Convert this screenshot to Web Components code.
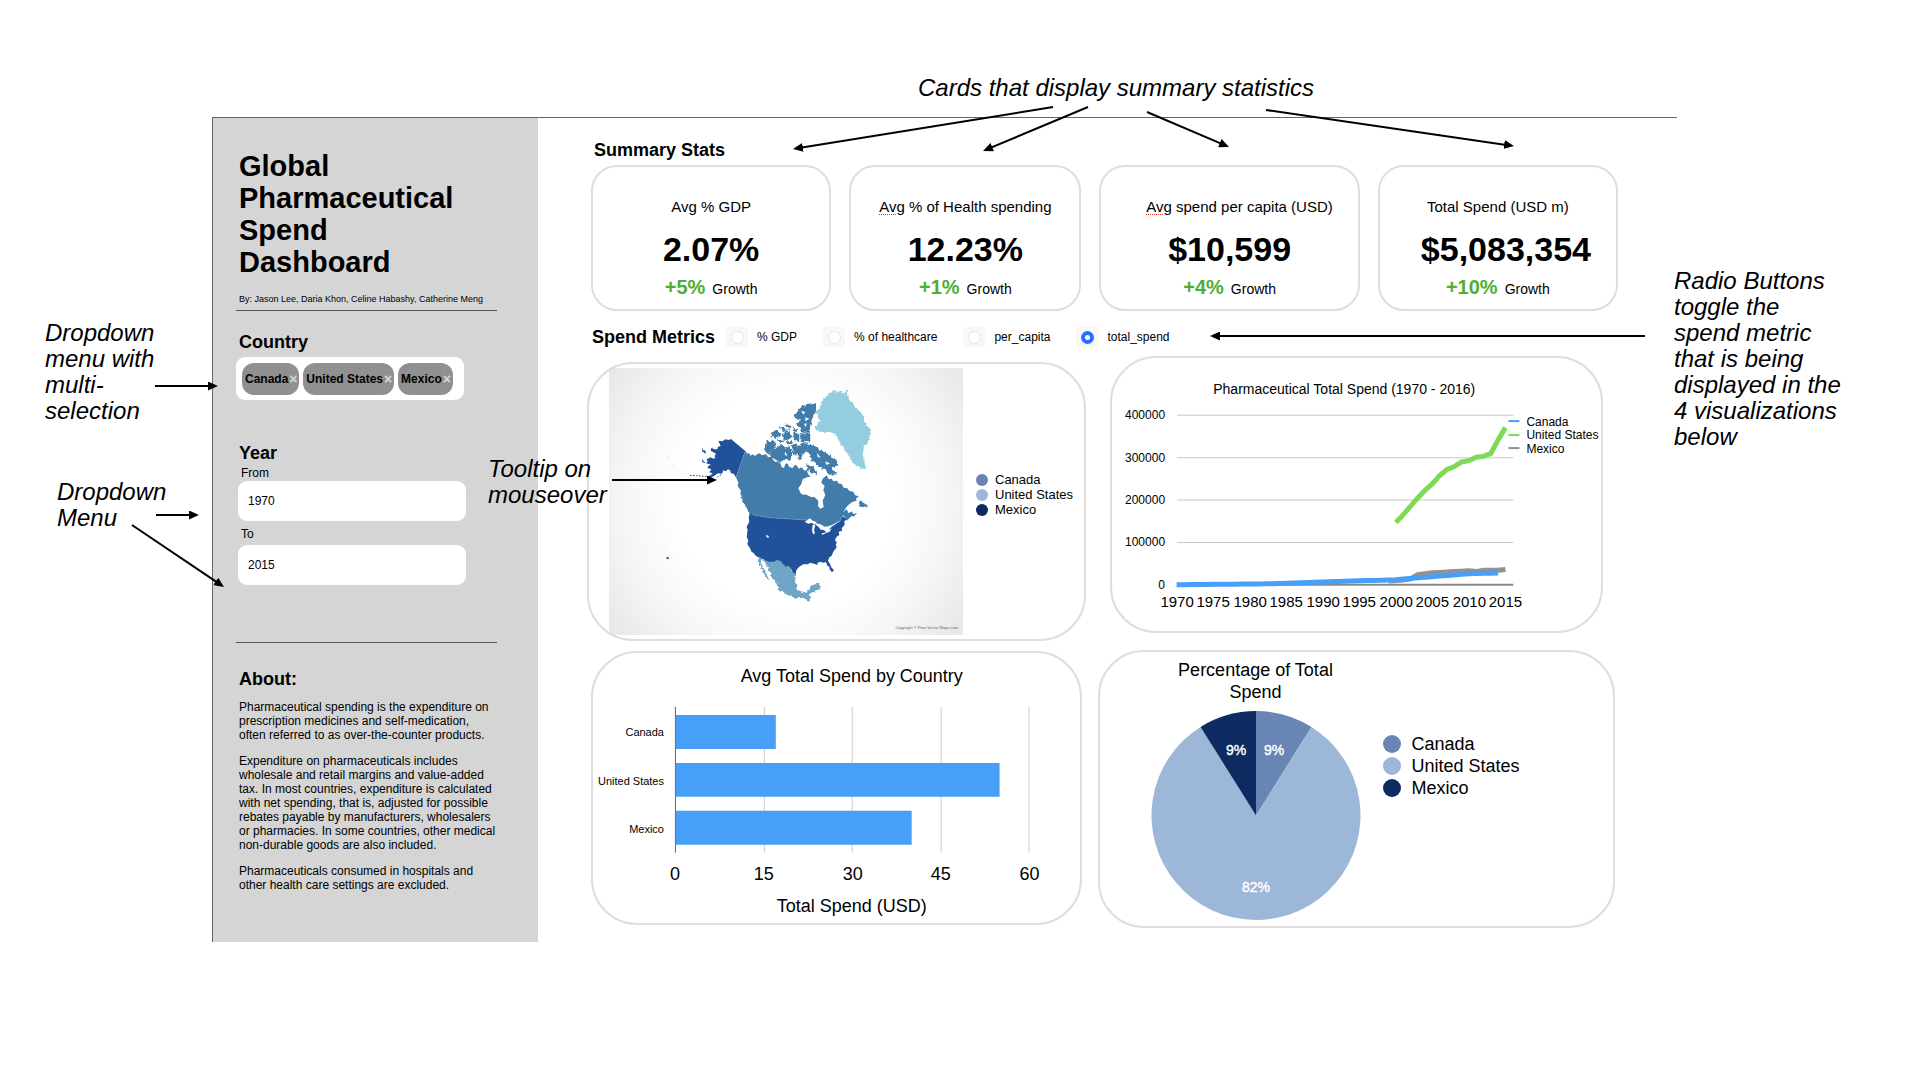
<!DOCTYPE html>
<html lang="en">
<head>
<meta charset="utf-8">
<title>Global Pharmaceutical Spend Dashboard</title>
<style>
  body { margin: 0; background: #fff; color: #000; font-family: "Liberation Sans", Arial, sans-serif; position: relative; overflow-x: hidden; }
</style>
</head>
<body>
<spend-dashboard>
  <filter-sidebar slot="side"></filter-sidebar>
  <stat-card slot="stat" label="% GDP" avg value="2.07%" growth="+5%"></stat-card>
  <stat-card slot="stat" label="% of Health spending" avg flagged value="12.23%" growth="+1%"></stat-card>
  <stat-card slot="stat" label="spend per capita (USD)" avg flagged label-end value="$10,599" growth="+4%"></stat-card>
  <stat-card slot="stat" label="Total Spend (USD m)" value-end value="$5,083,354" growth="+10%"></stat-card>
  <metric-picker slot="metrics"></metric-picker>
  <chart-card slot="left"><map-chart></map-chart></chart-card>
  <chart-card slot="left" class="inset"><bar-chart></bar-chart></chart-card>
  <chart-card slot="right" class="inset"><line-chart></line-chart></chart-card>
  <chart-card slot="right"><pie-chart></pie-chart></chart-card>
</spend-dashboard>
<note-layer>
  <call-out x="918" y="75" w="420">Cards that display summary statistics</call-out>
  <call-out x="45" y="320" w="120">Dropdown menu with multi-selection</call-out>
  <call-out x="57" y="479" w="120">Dropdown Menu</call-out>
  <call-out x="488" y="456" w="125">Tooltip on mouseover</call-out>
  <call-out x="1674" y="268" w="172">Radio Buttons toggle the spend metric that is being displayed in the 4 visualizations below</call-out>
</note-layer>
<script>
const define = (name, html, ready) => customElements.define(name, class extends HTMLElement {
  constructor() {
    super();
    this.attachShadow({ mode: 'open' });
  }
  connectedCallback() {
    this.shadowRoot.innerHTML = typeof html === 'function' ? html(this) : html;
    if (ready) ready(this);
  }
});

define('spend-dashboard', `
<style>
  :host { display: flex; margin: 117px 243px 0 212px; border-top: 1px solid #666; }
  main { flex: 1; min-width: 0; padding: 22px 62px 0 49px; }
  h2 { margin: 0 0 5px 7px; font-size: 18px; line-height: 20px; }
  .stats { display: grid; grid-template-columns: 240fr 232fr 260fr 240fr; gap: 18px; margin: 0 -3px 16px 4px; }
  .charts { display: grid; grid-template-columns: 499fr 518fr; gap: 12px; margin-top: 9px; }
  .left, .right { display: flex; flex-direction: column; min-width: 0; }
  .left { gap: 10px; padding-top: 6px; }
  .right { gap: 17px; }
  .left ::slotted(.inset) { margin: 0 4px; }
  .right ::slotted(.inset) { margin: 0 12px; }
</style>
<slot name="side"></slot>
<main>
  <h2>Summary Stats</h2>
  <div class="stats"><slot name="stat"></slot></div>
  <slot name="metrics"></slot>
  <div class="charts">
    <div class="left"><slot name="left"></slot></div>
    <div class="right"><slot name="right"></slot></div>
  </div>
</main>`);

define('filter-sidebar', `
<style>
  :host { display: block; box-sizing: border-box; flex: 0 0 326px; min-height: 824px; background: #d5d5d5; border-left: 1px solid #666; padding: 32px 32px 0 23px; }
  h1 { margin: 0 0 15px 3px; font-size: 29px; line-height: 32px; }
  .by { margin: 0 0 5px 3px; font-size: 9px; line-height: 12px; white-space: nowrap; }
  hr { width: 261px; margin: 0; border: 0; border-top: 1px solid #555; }
  h2 { margin: 0 0 0 3px; font-size: 18px; line-height: 20px; }
  .country { margin-top: 21px; }
  .chips { display: flex; align-items: center; gap: 4px; box-sizing: border-box; width: 228px; height: 43px; margin: 5px 0 43px; padding: 0 6px; background: #fff; border-radius: 9px; }
  .chip { display: flex; align-items: center; height: 32px; padding: 0 1px 0 3px; border-radius: 12px; background: #909090; font-size: 12px; font-weight: bold; }
  .chip button { all: unset; width: 10px; text-align: center; color: #d8d8d8; font-size: 14px; line-height: 14px; cursor: pointer; }
  label { display: block; margin: 3px 0 0 5px; font-size: 12px; line-height: 14px; }
  .to { margin-top: 6px; }
  select { appearance: none; display: block; width: 228px; height: 40px; margin: 1px 0 0 2px; padding: 0 10px; border: 0; border-radius: 9px; background: #fff; color: #000; font: 12px "Liberation Sans", Arial, sans-serif; }
  .to + select { margin-top: 4px; }
  .rule { margin-top: 57px; }
  .about { margin-top: 26px; margin-bottom: 11px; }
  p { margin: 0 4px 12px 3px; font-size: 12px; line-height: 14px; }
</style>
<h1>Global<br>Pharmaceutical<br>Spend<br>Dashboard</h1>
<div class="by">By: Jason Lee, Daria Khon, Celine Habashy, Catherine Meng</div>
<hr>
<h2 class="country">Country</h2>
<div class="chips">
  <span class="chip">Canada<button aria-label="Remove Canada">×</button></span>
  <span class="chip">United States<button aria-label="Remove United States">×</button></span>
  <span class="chip">Mexico<button aria-label="Remove Mexico">×</button></span>
</div>
<h2>Year</h2>
<label for="from">From</label>
<select id="from"><option>1970</option></select>
<label class="to" for="to">To</label>
<select id="to"><option>2015</option></select>
<hr class="rule">
<h2 class="about">About:</h2>
<p>Pharmaceutical spending is the expenditure on prescription medicines and self-medication,<br>often referred to as over-the-counter products.</p>
<p>Expenditure on pharmaceuticals includes wholesale and retail margins and value-added tax. In most countries, expenditure is calculated with net spending, that is, adjusted for possible rebates payable by manufacturers, wholesalers<br>or pharmacies. In some countries, other medical non-durable goods are also included.</p>
<p>Pharmaceuticals consumed in hospitals and<br>other health care settings are excluded.</p>`);

define('stat-card', el => `
<style>
  :host { display: block; box-sizing: border-box; height: 146px; padding: 31px 25px 0; border: 2px solid #dedede; border-radius: 26px; text-align: center; white-space: nowrap; }
  .label { font-size: 15px; line-height: 18px; }
  .flag { text-decoration: underline dotted #e33 1px; text-underline-offset: 2px; }
  .value { margin-top: 14px; font-size: 34px; line-height: 38px; font-weight: bold; }
  .end { text-align: right; }
  .growth { display: flex; justify-content: center; align-items: baseline; gap: 7px; margin-top: 7px; line-height: 24px; font-size: 14px; }
  b { color: #4fae33; font-size: 20px; }
</style>
<div class="label ${el.hasAttribute('label-end') ? 'end' : ''}">${el.hasAttribute('avg') ? `<span class="${el.hasAttribute('flagged') ? 'flag' : ''}">Avg</span> ` : ''}${el.getAttribute('label')}</div>
<div class="value ${el.hasAttribute('value-end') ? 'end' : ''}">${el.getAttribute('value')}</div>
<div class="growth"><b>${el.getAttribute('growth')}</b><span>Growth</span></div>`);

define('metric-picker', () => `
<style>
  :host { display: flex; align-items: center; height: 20px; padding-left: 5px; }
  h2 { margin: 0 11px 0 0; font-size: 18px; line-height: 20px; }
  .set { display: flex; gap: 26px; }
  label { display: flex; align-items: center; gap: 9px; font-size: 12px; line-height: 20px; }
  .tile { display: flex; align-items: center; justify-content: center; width: 22px; height: 20px; background: #f7f8fa; }
  input { appearance: none; box-sizing: border-box; width: 13px; height: 13px; margin: 0; border: 1px solid #e4e6ea; border-radius: 50%; background: #fff; }
  input:checked { border: 4px solid #2f6bff; }
</style>
<h2>Spend Metrics</h2>
<div class="set">${['% GDP', '% of healthcare', 'per_capita', 'total_spend'].map((t, i) =>
  `<label><span class="tile"><input type="radio" name="metric" ${i === 3 ? 'checked' : ''}></span>${t}</label>`).join('')}</div>`);

define('chart-card', `
<style>
  :host { display: block; position: relative; }
  :host::after { content: ""; position: absolute; inset: 0; border: 2px solid #dedede; border-radius: 46px; pointer-events: none; }
</style>
<slot></slot>`);

const legend = (size, dot, gap) => `
  ul { list-style: none; margin: 0; padding: 0; font-size: ${size}px; white-space: nowrap; }
  li { display: flex; align-items: center; gap: ${gap}px; }
  li::before { content: ""; width: ${dot}px; height: ${dot}px; border-radius: 50%; background: var(--dot); }`;
const legendItems = `<ul>
  <li style="--dot:#6885b5">Canada</li>
  <li style="--dot:#9cb7d7">United States</li>
  <li style="--dot:#0d2b60">Mexico</li>
</ul>`;

define('map-chart', `
<style>
  :host { display: flex; align-items: center; gap: 13px; padding: 6px 0 6px 22px; }
  svg { display: block; flex: 0 1 354px; min-width: 0; }
  ${legend(13, 12, 7)}
  ul { padding-bottom: 14px; }
  li { line-height: 15px; }
</style>
<svg viewBox="609 368 354 267" role="img" aria-label="Map of North America">
  <defs>
    <radialGradient id="bg" gradientUnits="userSpaceOnUse" cx="786" cy="500" r="215">
      <stop offset="0.5" stop-color="#fff"/><stop offset="0.75" stop-color="#f6f6f6"/><stop offset="1" stop-color="#e8e8e8"/>
    </radialGradient>
    <filter id="coast" x="-5%" y="-5%" width="110%" height="110%" color-interpolation-filters="sRGB">
      <feTurbulence type="fractalNoise" baseFrequency="0.12" numOctaves="2" seed="4"/>
      <feDisplacementMap in="SourceGraphic" scale="13" xChannelSelector="R" yChannelSelector="G"/>
    </filter>
  </defs>
  <rect x="609" y="368" width="354" height="267" fill="url(#bg)"/>
  <g transform="translate(660 380) scale(.3333)">
    <g filter="url(#coast)">
      <path fill="#94cde0" d="M505 42L520 32 535 36 545 30 550 40 562 27 566 55 582 75 600 95 612 108 612 125 632 148 627 178 614 200 608 225 618 268 600 264 580 250 565 225 550 200 540 190 530 168 510 155 475 155 463 140 480 122 467 100 480 80 490 58Z"/>
      <g fill="#417caa">
        <path d="M600 358L610 368 626 378 612 380 596 376Z"/>
        <path d="M405 105L420 85 440 72 468 70 468 92 456 118 450 140 450 158 428 158 418 142 408 135 420 122 402 112Z"/>
        <path d="M320 184L345 182 348 198 328 222 311 208Z"/>
        <path d="M340 207L365 193 375 203 388 198 397 215 392 240 375 236 362 248 345 238 328 224Z"/>
        <path d="M395 196L412 190 420 204 410 226 400 226ZM422 190L446 190 442 205 427 225 420 244 412 225Z"/>
        <path d="M446 194L465 198 480 210 500 220 515 233 532 243 530 262 515 264 532 282 510 287 495 267 480 264 470 250 455 242 450 222 436 212Z"/>
        <path d="M438 250L460 260 472 284 455 280 442 268Z"/>
        <path d="M330 160L352 150 362 165 345 178ZM365 163L388 156 398 172 372 182ZM400 158L418 163 418 184 402 180ZM353 143L372 140 376 152ZM376 130L394 138 388 152ZM398 143L412 148 404 160ZM420 162L452 160 450 187 422 186ZM350 178L375 184 360 190ZM366 150L386 152 378 162ZM378 184L400 184 396 192 380 192Z"/>
        <path d="M240 310L248 322 244 330ZM244 340L252 358 246 358ZM256 372L276 398 268 400Z"/>
      </g>
      <path fill="#20519a" d="M128 208L138 214 132 218ZM126 236L134 246 128 248Z"/>
      <path fill="#6fa5c5" d="M290 520L308 526 325 535 350 530 370 545 385 550 395 570 408 582 405 605 413 630 430 637 448 632 455 616 482 610 477 628 460 636 450 640 452 655 446 662 430 653 405 655 375 642 355 628 352 612 335 590 325 565 312 542 302 540 308 560 320 580 328 600 318 594 302 566Z"/>
    </g>
    <path fill="#417caa" d="M256 213L262 221 267 219 272 227 278 223 285 228 292 222 300 220 305 226 318 223 324 231 335 230 340 241 347 246 353 244 362 251 365 262 372 264 376 252 382 250 388 261 398 264 405 254 412 258 416 266 425 262 433 272 440 270 444 282 452 290 440 292 428 298 424 312 415 325 422 340 430 345 436 343 455 352 462 350 475 362 474 377 480 386 491 382 488 362 496 345 490 330 494 318 484 308 488 296 500 286 506 298 515 296 520 304 532 302 534 310 545 312 551 323 562 325 568 333 580 335 585 345 597 350 588 355 590 362 577 366 565 375 556 387 548 397 560 388 566 400 575 394 580 402 592 399 580 410 575 408 560 422 556 414 550 405 540 422 515 435 495 440 470 430 440 420 330 413 280 405 270 400 262 388 258 378 246 364 250 352 241 343 243 332 233 318 235 308 228 292Z"/>
    <path fill="#20519a" d="M175 182L188 184 195 178 207 180 213 177 219 182 228 190 256 213 228 292 221 281 213 280 210 271 204 268 198 274 190 271 186 281 174 280 162 288 150 294 140 290 152 286 158 280 148 277 154 268 142 264 146 257 153 254 138 250 143 244 140 238 152 232 160 236 166 234 164 228 168 221 152 212 154 203 163 208 172 208 174 200 182 198Z"/>
    <path fill="#20519a" d="M280 405L330 413 440 420 452 428 465 432 480 445 500 455 515 440 540 424 548 408 560 418 553 424 554 434 545 445 547 452 536 455 538 465 530 470 525 480 531 488 527 492 530 502 520 515 515 527 508 532 504 542 510 552 514 562 522 571 516 577 509 568 508 560 502 557 498 546 490 548 480 545 472 549 474 555 465 552 450 548 444 553 430 553 418 560 412 566 408 574 408 582 398 577 392 564 385 558 378 560 370 553 362 543 350 540 343 545 325 545 305 535 288 528 280 518 275 516 270 505 262 492 265 482 260 470 263 450 260 440 268 425 266 412 270 400Z"/>
    <path fill="#fdfdfd" d="M434 425L442 420 450 415 458 422 470 426 464 432 455 428 445 431ZM458 436L462 432 466 438 462 450 465 460 459 463 456 450ZM472 432L482 433 492 440 486 450 480 448 478 440ZM484 460L495 458 500 450 515 446 508 456 500 458 488 464ZM318 464L326 468 326 474 320 472ZM556 385L564 377 575 372 590 380 584 385 580 395 566 392Z"/>
    <path fill="#fdfdfd" d="M424 92L436 96 430 104ZM436 112L448 116 436 124ZM432 132L440 130 438 142ZM376 214L382 228 374 224ZM470 218L482 232 474 232ZM495 244L510 250 500 255Z"/>
    <g fill="none" stroke="#6c98c0" stroke-width="2"><path d="M256 213L228 292M280 405L330 413 440 420M500 440L515 435 540 422 550 405"/></g>
    <g fill="none" stroke="#20519a" stroke-width="3" stroke-dasharray="5 4"><path d="M90 286L110 287 150 290M172 292L184 284"/></g>
    <g fill="none" stroke="#b5c4de" stroke-width="2" stroke-dasharray="3 8"><path d="M22 230h4M36 255L60 276 75 282M8 503L20 522"/></g>
    <path fill="#20519a" d="M19 531L27 532 25 538 20 537Z"/>
  </g>
  <text x="958" y="629" text-anchor="end" font-size="4" fill="#666">Copyright © Free Vector Maps.com</text>
</svg>
${legendItems}`);

define('line-chart', () => {
  const px = year => 1176.5 + 7.3 * (year - 1970);
  const py = v => 584.5 - v * 42.3 / 100;
  const line = (start, values) => values.map((v, i) => px(start + i) + ',' + py(v)).join(' ');
  const canada = Array.from({ length: 45 }, (_, i) => i < 12 ? i / 6 : i < 30 ? 2 + (i - 12) * .55 : i < 40 ? 12 + (i - 30) * 1.4 : 26 + (i - 40) * .4);
  return `
<style>
  :host { display: block; }
  svg { display: block; width: 100%; }
</style>
<svg viewBox="1110 356 493 277" role="img" aria-label="Pharmaceutical total spend by year">
  <text x="1344" y="394" font-size="14" text-anchor="middle">Pharmaceutical Total Spend (1970 - 2016)</text>
  <g stroke="#c8c8c8">${[100, 200, 300, 400].map(v => `<line x1="1177" x2="1513" y1="${py(v)}" y2="${py(v)}"/>`).join('')}</g>
  <line x1="1177" x2="1513" y1="584.5" y2="584.5" stroke="#888" stroke-width="2"/>
  <g font-size="12" text-anchor="end">${[0, 100, 200, 300, 400].map(v => `<text x="1165" y="${Math.round(py(v) + 4)}">${v * 1000}</text>`).join('')}</g>
  <g font-size="15" text-anchor="middle">${Array.from({ length: 10 }, (_, i) => `<text x="${Math.round(px(1970 + i * 5))}" y="607">${1970 + i * 5}</text>`).join('')}</g>
  <g fill="none" stroke-width="5">
    <polyline stroke="#919191" points="${line(1999, [9, 10, 11, 14, 24, 26, 28, 29, 30, 31, 32, 33, 31, 34, 34, 34, 36])}"/>
    <polygon fill="#919191" stroke="none" points="${line(2002, [13, 24, 26, 28, 29, 30, 31, 32, 33, 31, 34, 34, 34])} ${px(2010)},${py(25)}"/>
    <polyline stroke="#489ff8" points="${line(1970, canada)}"/>
    <polyline stroke="#7fd955" points="${line(2000, [147, 165, 185, 205, 223, 238, 258, 272, 279, 290, 293, 301, 303, 310, 342, 371])}"/>
  </g>
  <g stroke-width="2"><path stroke="#489ff8" d="M1508 421h11"/><path stroke="#7fd955" d="M1508 435h11"/><path stroke="#919191" d="M1508 448h11"/></g>
  <g font-size="12"><text x="1526" y="426">Canada</text><text x="1526" y="439">United States</text><text x="1526" y="453">Mexico</text></g>
</svg>`;
});

define('bar-chart', () => `
<style>
  :host { display: block; }
  svg { display: block; width: 100%; }
</style>
<svg viewBox="591 651 491 274" role="img" aria-label="Average total spend by country">
  <text x="852" y="682" font-size="18" text-anchor="middle">Avg Total Spend by Country</text>
  <path stroke="#ccc" d="M764.5 707V853M852.5 707V853M941.5 707V853M1029.5 707V853"/>
  <path fill="#489ff8" d="M676 715H776V749H676ZM676 763H1000V797H676ZM676 811H912V845H676Z"/>
  <path stroke="#666" d="M675.5 707V853"/>
  <g font-size="11" text-anchor="end"><text x="664" y="736">Canada</text><text x="664" y="785">United States</text><text x="664" y="833">Mexico</text></g>
  <g font-size="18" text-anchor="middle"><text x="675" y="880">0</text><text x="764" y="880">15</text><text x="853" y="880">30</text><text x="941" y="880">45</text><text x="1030" y="880">60</text><text x="852" y="912">Total Spend (USD)</text></g>
</svg>`);

define('pie-chart', () => {
  const cx = 1256, cy = 815.5, r = 104.5;
  const pt = share => `${cx + r * Math.sin(share * 2 * Math.PI)} ${cy - r * Math.cos(share * 2 * Math.PI)}`;
  const slice = (a, b, fill) => `<path fill="${fill}" d="M${cx} ${cy}L${pt(a)}A${r} ${r} 0 ${b - a > .5 ? 1 : 0} 1 ${pt(b)}Z"/>`;
  return `
<style>
  :host { display: flex; align-items: flex-start; gap: 22px; padding: 9px 0 7px 53px; }
  .plot { flex: 0 1 210px; min-width: 0; }
  h3 { margin: 0 auto 7px; width: 180px; font-size: 18px; line-height: 22px; font-weight: normal; text-align: center; }
  svg { display: block; width: 100%; }
  ${legend(18, 18, 11)}
  li { line-height: 22px; }
  ul { padding-top: 74px; }
</style>
<div class="plot">
  <h3>Percentage of Total Spend</h3>
  <svg viewBox="1151 710 210 211" role="img" aria-label="Share of total spend by country">
    ${slice(0, .089, '#6885b5')}${slice(.089, .911, '#9cb7d7')}${slice(.911, 1, '#0d2b60')}
    <g font-size="14" fill="#fff" stroke="#fff" stroke-width=".4" text-anchor="middle"><text x="1236" y="755">9%</text><text x="1274" y="755">9%</text><text x="1256" y="892">82%</text></g>
  </svg>
</div>
${legendItems}`;
});

define('call-out', `
<style>
  :host { display: block; position: absolute; font-size: 24px; line-height: 26px; font-style: italic; }
</style><slot></slot>`, el => {
  el.style.left = el.getAttribute('x') + 'px';
  el.style.top = el.getAttribute('y') + 'px';
  el.style.width = el.getAttribute('w') + 'px';
});

define('note-layer', () => {
  const arrows = [
    [1053, 107, 793, 149], [1088, 107, 983, 151], [1147, 112, 1229, 147], [1266, 110, 1514, 146],
    [1645, 336, 1210, 336], [155, 386, 218, 386], [156, 515, 199, 515], [132, 525, 224, 587], [612, 480, 717, 480]
  ];
  return `
<style>
  :host { display: block; position: absolute; top: 0; left: 0; pointer-events: none; }
  svg { display: block; overflow: visible; }
</style>
<svg width="1" height="1" aria-hidden="true">
  <defs><marker id="head" viewBox="0 0 10 8" refX="10" refY="4" markerWidth="10" markerHeight="9" markerUnits="userSpaceOnUse" preserveAspectRatio="none" orient="auto"><path d="M0 0L10 4L0 8Z"/></marker></defs>
  <g stroke="#000" stroke-width="2">${arrows.map(([a, b, c, d]) => {
    const n = Math.hypot(c - a, d - b), k = (n - 6) / n;
    return `<line x1="${a}" y1="${b}" x2="${a + (c - a) * k}" y2="${b + (d - b) * k}"/><line stroke="none" x1="${a}" y1="${b}" x2="${c}" y2="${d}" marker-end="url(#head)"/>`;
  }).join('')}</g>
</svg>
<slot></slot>`;
});
</script>
</body>
</html>
